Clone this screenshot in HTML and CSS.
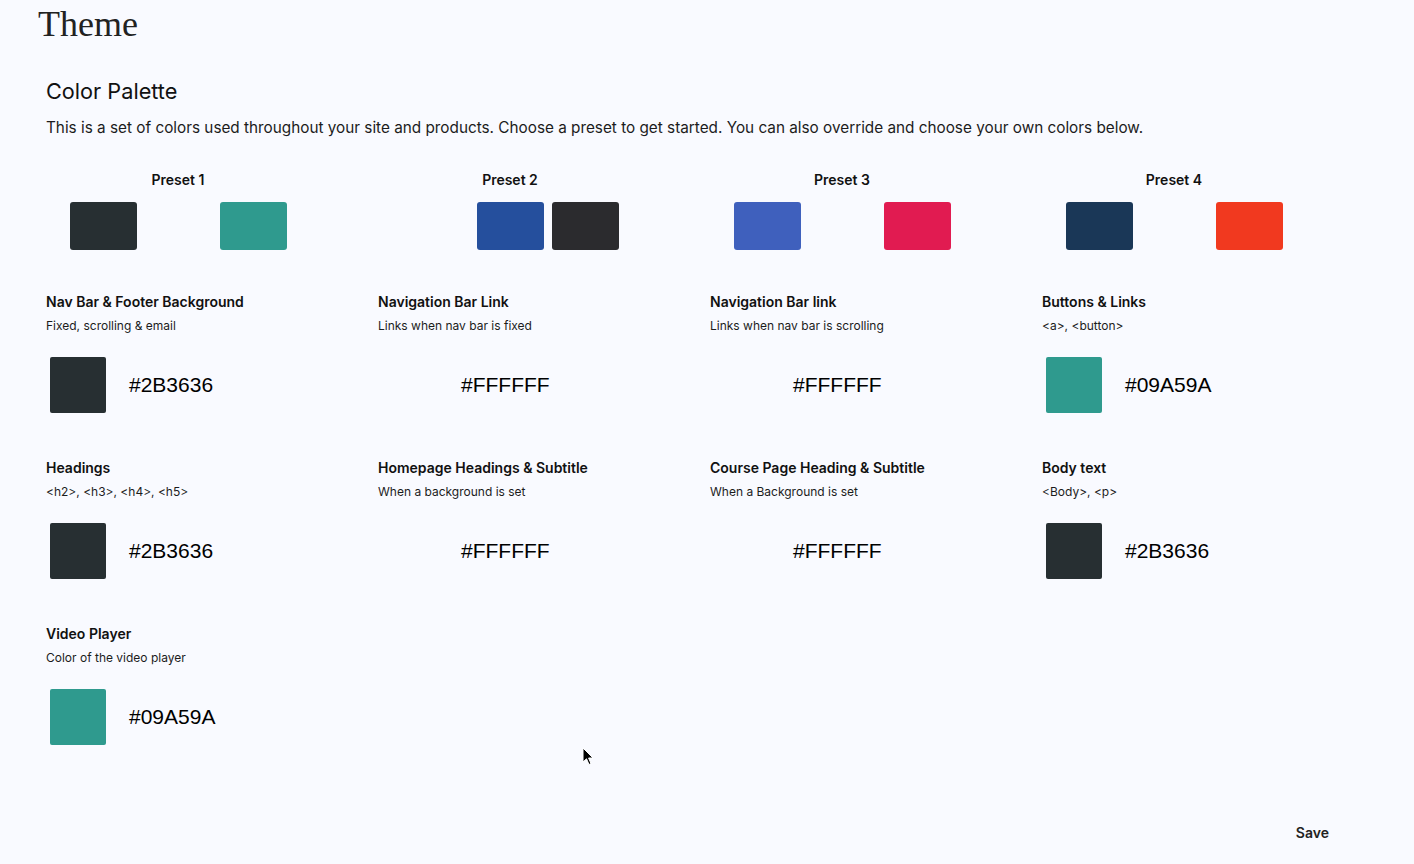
FILE: index.html
```html
<!DOCTYPE html>
<html lang="en">
<head>
<meta charset="utf-8">
<title>Theme</title>
<link rel="stylesheet" href="styles.css">
</head>
<body>
<div class="page">
  <h1 class="title">Theme</h1>
  <section class="palette">
    <h2 class="palette-title">Color Palette</h2>
    <p class="palette-desc">This is a set of colors used throughout your site and products. Choose a preset to get started. You can also override and choose your own colors below.</p>

    <div class="presets">
      <div class="preset">
        <div class="preset-label">Preset 1</div>
        <div class="preset-swatches">
          <span class="chip c-dark"></span><span class="chip c-white"></span><span class="chip c-teal"></span>
        </div>
      </div>
      <div class="preset">
        <div class="preset-label">Preset 2</div>
        <div class="preset-swatches">
          <span class="chip c-white"></span><span class="chip c-blue2"></span><span class="chip c-dark2"></span>
        </div>
      </div>
      <div class="preset">
        <div class="preset-label">Preset 3</div>
        <div class="preset-swatches">
          <span class="chip c-blue3"></span><span class="chip c-white"></span><span class="chip c-red3"></span>
        </div>
      </div>
      <div class="preset">
        <div class="preset-label">Preset 4</div>
        <div class="preset-swatches">
          <span class="chip c-navy"></span><span class="chip c-white"></span><span class="chip c-orange"></span>
        </div>
      </div>
    </div>

    <div class="colors">
      <div class="color-item">
        <div class="color-name">Nav Bar &amp; Footer Background</div>
        <div class="color-sub">Fixed, scrolling &amp; email</div>
        <div class="color-value"><span class="swatch c-dark"></span><span class="hex">#2B3636</span></div>
      </div>
      <div class="color-item">
        <div class="color-name">Navigation Bar Link</div>
        <div class="color-sub">Links when nav bar is fixed</div>
        <div class="color-value"><span class="swatch c-white"></span><span class="hex">#FFFFFF</span></div>
      </div>
      <div class="color-item">
        <div class="color-name">Navigation Bar link</div>
        <div class="color-sub">Links when nav bar is scrolling</div>
        <div class="color-value"><span class="swatch c-white"></span><span class="hex">#FFFFFF</span></div>
      </div>
      <div class="color-item">
        <div class="color-name">Buttons &amp; Links</div>
        <div class="color-sub">&lt;a&gt;, &lt;button&gt;</div>
        <div class="color-value"><span class="swatch c-teal"></span><span class="hex">#09A59A</span></div>
      </div>

      <div class="color-item">
        <div class="color-name">Headings</div>
        <div class="color-sub">&lt;h2&gt;, &lt;h3&gt;, &lt;h4&gt;, &lt;h5&gt;</div>
        <div class="color-value"><span class="swatch c-dark"></span><span class="hex">#2B3636</span></div>
      </div>
      <div class="color-item">
        <div class="color-name">Homepage Headings &amp; Subtitle</div>
        <div class="color-sub">When a background is set</div>
        <div class="color-value"><span class="swatch c-white"></span><span class="hex">#FFFFFF</span></div>
      </div>
      <div class="color-item">
        <div class="color-name">Course Page Heading &amp; Subtitle</div>
        <div class="color-sub">When a Background is set</div>
        <div class="color-value"><span class="swatch c-white"></span><span class="hex">#FFFFFF</span></div>
      </div>
      <div class="color-item">
        <div class="color-name">Body text</div>
        <div class="color-sub">&lt;Body&gt;, &lt;p&gt;</div>
        <div class="color-value"><span class="swatch c-dark"></span><span class="hex">#2B3636</span></div>
      </div>

      <div class="color-item">
        <div class="color-name">Video Player</div>
        <div class="color-sub">Color of the video player</div>
        <div class="color-value"><span class="swatch c-teal"></span><span class="hex">#09A59A</span></div>
      </div>
    </div>
  </section>

  <div class="footer">
    <button class="save" type="button">Save</button>
  </div>

  <svg class="cursor" width="12" height="19" viewBox="0 0 12 19" aria-hidden="true">
    <path d="M1 1 L1 15 L4.5 11.8 L7 17.5 L9 16.6 L6.6 11 L11 11 Z" fill="#000" stroke="#fff" stroke-width="1"/>
  </svg>
</div>
</body>
</html>
```

FILE: styles.css
```css
:root {
  --page-bg: #f9faff;
}

html, body {
  margin: 0;
  padding: 0;
  background: var(--page-bg);
}

body {
  font-family: Inter, "Noto Sans", "Liberation Sans", sans-serif;
  color: #141414;
}

.page {
  position: relative;
  width: 1414px;
  height: 864px;
  overflow: hidden;
}

.title {
  margin: 0;
  padding-left: 38px;
  font-family: "Liberation Serif", "DejaVu Serif", serif;
  font-weight: 400;
  font-size: 36px;
  line-height: 48px;
  color: #222;
}

.palette {
  padding-left: 46px;
}

.palette-title {
  margin: 29px 0 0;
  font-size: 21.7px;
  font-weight: 400;
  line-height: 28px;
  color: #111;
}

.palette-desc {
  margin: 11px 0 0;
  font-size: 15.3px;
  line-height: 24px;
  color: #1c1c1c;
}

.presets {
  display: grid;
  grid-template-columns: repeat(4, 332px);
  margin: 30px 0 0 -34px;
}

.preset {
  display: flex;
  flex-direction: column;
  align-items: center;
}

.preset-label {
  font-size: 14px;
  font-weight: 600;
  line-height: 20px;
  color: #111;
}

.preset-swatches {
  display: flex;
  gap: 8px;
  margin-top: 12px;
}

.chip {
  display: block;
  width: 67px;
  height: 48px;
  border-radius: 3px;
}

.colors {
  display: grid;
  grid-template-columns: repeat(4, 332px);
  row-gap: 45px;
  margin-top: 42px;
}

.color-name {
  font-size: 14px;
  font-weight: 600;
  line-height: 20px;
  color: #111;
}

.color-sub {
  margin-top: 6px;
  font-size: 12px;
  line-height: 16px;
  color: #1c1c1c;
}

.color-value {
  display: flex;
  align-items: center;
  margin-top: 23px;
  padding-left: 4px;
}

.swatch {
  display: block;
  width: 56px;
  height: 56px;
  border-radius: 2px;
}

.hex {
  margin-left: 23px;
  font-family: "Liberation Sans", Arial, sans-serif;
  font-size: 21px;
  color: #000;
}

.c-dark { background: #272f32; }
/* white swatches blend into the near-white page in the reference */
.c-white { background: var(--page-bg); }
.c-teal { background: #2f9a8e; }
.c-blue2 { background: #254f9d; }
.c-dark2 { background: #2b2b2e; }
.c-blue3 { background: #3f60bd; }
.c-red3 { background: #e11b51; }
.c-navy { background: #1a3757; }
.c-orange { background: #f1391f; }

.footer {
  position: absolute;
  left: 0;
  right: 0;
  bottom: 21px;
  display: flex;
  justify-content: flex-end;
  padding-right: 85px;
}

.save {
  border: 0;
  background: transparent;
  padding: 0;
  font-family: Inter, "Noto Sans", sans-serif;
  font-size: 14px;
  font-weight: 600;
  line-height: 20px;
  color: #222;
  cursor: pointer;
}

.cursor {
  position: absolute;
  left: 582px;
  top: 747px;
}
```
